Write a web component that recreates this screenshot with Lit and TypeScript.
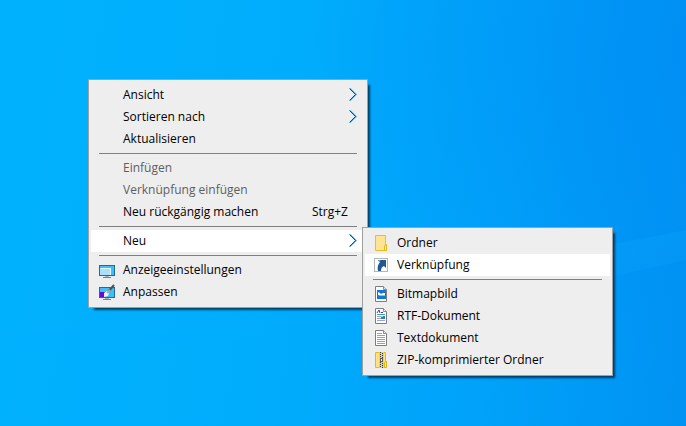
import { LitElement, html, svg, css, nothing, type TemplateResult } from "lit";
import { customElement, property } from "lit/decorators.js";

type Entry =
  | "separator"
  | {
      label: string;
      icon?: string;
      keys?: string;
      disabled?: boolean;
      active?: boolean;
      more?: boolean;
      items?: Entry[];
    };

const page = svg`
  <path d="M2.5 .5h8l3 3v12h-11z" fill="#fff" stroke="#7d7d7d"/>
  <path d="M10.5 .5v3h3" fill="#e4e4e4" stroke="#8d8d8d"/>`;

const icons: Record<string, TemplateResult<2>> = {
  folder: svg`
    <path d="M2.500 .5h10v9h1v6h-11z" fill="#ffe591" stroke="#e9be2b"/>
    <path d="M11.500 15.500v-5l2-1v6z" fill="#fff0b8" stroke="#e5b61a"/>`,
  shortcut: svg`
    <rect x="1.500" y="1.500" width="13" height="13" fill="#fff" stroke="#b3b6bb"/>
    <path d="M5 3h8v8l-2-2c-2 1-3 2-3 5H5c-1-4 0-6 2-9z" fill="#24568f"/>
    <path d="M5 3h3L6 5z" fill="#6c93bd"/>`,
  bitmap: svg`${page}
    <rect x="4" y="4" width="9" height="9" fill="#0b78dc"/>
    <path d="M5 9V6l2 1 1 1 2-1 2 0v2l-1 1-1-1-1 1-1-1-1 1-1-1z" fill="#fff"/>`,
  rtf: svg`${page}
    <path d="M4 5l2-3 1 3M8 4.500h2" fill="none" stroke="#4637c8"/>
    <path d="M4 6.500h8" stroke="#3da99c"/>
    <path d="M4 8.500h4M4 10.500h4M4 12.500h8" stroke="#9da3c6"/>
    <rect x="8" y="8" width="4" height="3" fill="#2c7fc1"/>
    <rect x="8" y="8" width="2" height="1" fill="#9bd3e8"/>`,
  text: svg`${page}
    <path d="M4 3.500h5M4 5.500h8M4 7.500h8M4 9.500h8M4 11.500h8M4 13.500h8" stroke="#a0a0a0"/>`,
  zip: svg`
    <path d="M2.500 .5h10v9h1v6h-11z" fill="#ffe27c" stroke="#e9b818"/>
    <path d="M11.500 15.500v-5l2-1v6z" fill="#fff0b8" stroke="#e4b20d"/>
    <rect x="6" y="0" width="5" height="16" fill="#d5cfba"/>
    <path d="M7.500 0v6M9.500 1v6" stroke="#333" stroke-dasharray="1 1"/>
    <rect x="7" y="6" width="3" height="4" fill="#5b5b58"/>
    <rect x="8" y="7" width="1" height="2" fill="#eee"/>
    <path d="M7.500 10v6M9.500 11v5" stroke="#333" stroke-dasharray="1 1"/>`,
  display: svg`
    <rect x=".5" y="3.500" width="15" height="10" fill="#43bdf4" stroke="#176f9f"/>
    <path d="M1 6h11v7H1z" fill="#a9e0fc"/>
    <path d="M2 6.500h10M11.500 7v6" stroke="#e8f8ff"/>
    <path d="M6 14.500h4" stroke="#9cb3c1"/>
    <path d="M4 15.500h8" stroke="#6089a3"/>`,
  personalize: svg`
    <rect x=".5" y="3.500" width="15" height="10" fill="#43bdf4" stroke="#176f9f"/>
    <path d="M1 8h5v5H1z" fill="#5a10d8"/>
    <path d="M5 9l3-2 2 2-1 3-4 1z" fill="#eef7fb"/>
    <path d="M9 8l6-7" stroke="#4d5357" stroke-width="2"/>
    <path d="M8 9l3-3" stroke="#a9b1b6" stroke-width="2"/>
    <path d="M6 14.500h4" stroke="#9cb3c1"/>
    <path d="M4 15.500h8" stroke="#6089a3"/>`,
};

@customElement("context-menu")
export class ContextMenu extends LitElement {
  @property({ attribute: false }) items: Entry[] = [];

  static styles = css`
    :host {
      display: block;
      box-sizing: border-box;
      background: #eee;
      border: 1px solid #a0a09c;
      padding: 4px 2px;
      box-shadow: 4px 4px 2px -2px rgba(0, 20, 45, 0.7);
      color: #000;
      font: 12px/22px "Segoe UI", "Open Sans", "Noto Sans", sans-serif;
    }
    .list {
      list-style: none;
      margin: 0;
      padding: 0;
    }
    .entry {
      position: relative;
    }
    .separator {
      height: 1px;
      margin: 3px 8px;
      background: #808080;
    }
    .item {
      display: flex;
      align-items: center;
      gap: 8px;
      width: 100%;
      height: 22px;
      margin: 0;
      padding: 0 8px;
      border: 0;
      background: none;
      color: inherit;
      font: inherit;
      text-align: left;
      white-space: nowrap;
    }
    .item:hover:enabled,
    .active {
      background: #fff;
    }
    .item:disabled {
      color: #5e5e5e;
    }
    .icon {
      flex: none;
      width: 16px;
      height: 16px;
    }
    .label {
      flex: 1;
    }
    .keys {
      padding-right: 9px;
    }
    .chevron {
      flex: none;
      width: 8px;
      height: 14px;
      fill: none;
    }
    .submenu {
      position: absolute;
      z-index: 1;
      top: -3px;
      left: calc(100% - 3px);
      width: 251px;
    }
  `;

  private entry(e: Entry): TemplateResult {
    if (e === "separator") return html`<li class="separator" role="separator"></li>`;
    return html`<li class="entry" role="none">
      <button
        class="item ${e.active ? "active" : ""}"
        role="menuitem"
        ?disabled=${e.disabled}
        aria-haspopup=${e.more ? "menu" : nothing}
      >
        <svg class="icon" viewBox="0 0 16 16" aria-hidden="true">${e.icon ? icons[e.icon] : nothing}</svg>
        <span class="label">${e.label}</span>
        ${e.keys ? html`<span class="keys">${e.keys}</span>` : nothing}
        ${e.more
          ? html`<svg class="chevron" viewBox="0 0 8 14" aria-hidden="true">
              <path d="M1 .5l6 6-6 6" stroke="#5ab0e6" stroke-width="1.4" />
              <path d="M.6 .5l6 6-6 6" stroke="#2a2a38" stroke-width=".9" />
            </svg>`
          : nothing}
      </button>
      ${e.items ? html`<context-menu class="submenu" .items=${e.items}></context-menu>` : nothing}
    </li>`;
  }

  render() {
    return html`<ul class="list" role="menu">${this.items.map((e) => this.entry(e))}</ul>`;
  }
}

@customElement("app-root")
export class AppRoot extends LitElement {
  static styles = css`
    :host {
      display: block;
      position: relative;
      min-height: 100vh;
      overflow: hidden;
      background:
        radial-gradient(ellipse 60% 80% at 105% 10%, rgba(0, 140, 244, 0.7), rgba(0, 148, 250, 0) 100%),
        linear-gradient(98deg, #00b2fe 0%, #00adfc 40%, #00a2fa 72%, #0092f2 100%);
    }
    .beams {
      position: absolute;
      inset: 0;
      width: 100%;
      height: 100%;
    }
    .menu {
      position: absolute;
      left: 88px;
      top: 79px;
      width: 280px;
    }
  `;

  private items: Entry[] = [
    { label: "Ansicht", more: true },
    { label: "Sortieren nach", more: true },
    { label: "Aktualisieren" },
    "separator",
    { label: "Einfügen", disabled: true },
    { label: "Verknüpfung einfügen", disabled: true },
    { label: "Neu rückgängig machen", keys: "Strg+Z" },
    "separator",
    {
      label: "Neu",
      more: true,
      active: true,
      items: [
        { label: "Ordner", icon: "folder" },
        { label: "Verknüpfung", icon: "shortcut", active: true },
        "separator",
        { label: "Bitmapbild", icon: "bitmap" },
        { label: "RTF-Dokument", icon: "rtf" },
        { label: "Textdokument", icon: "text" },
        { label: "ZIP-komprimierter Ordner", icon: "zip" },
      ],
    },
    "separator",
    { label: "Anzeigeeinstellungen", icon: "display" },
    { label: "Anpassen", icon: "personalize" },
  ];

  render() {
    return html`
      <svg class="beams" viewBox="0 0 686 426" preserveAspectRatio="none" aria-hidden="true">
        <defs>
          <linearGradient id="beam" x1="0" x2="0" y1="0" y2="1">
            <stop offset="0" stop-color="#10a8ff" stop-opacity=".25" />
            <stop offset="1" stop-color="#10a8ff" stop-opacity="0" />
          </linearGradient>
        </defs>
        <path d="M0 325Q340 300 686 230V260Q340 340 0 360z" fill="url(#beam)" />
      </svg>
      <context-menu class="menu" .items=${this.items}></context-menu>
    `;
  }
}
